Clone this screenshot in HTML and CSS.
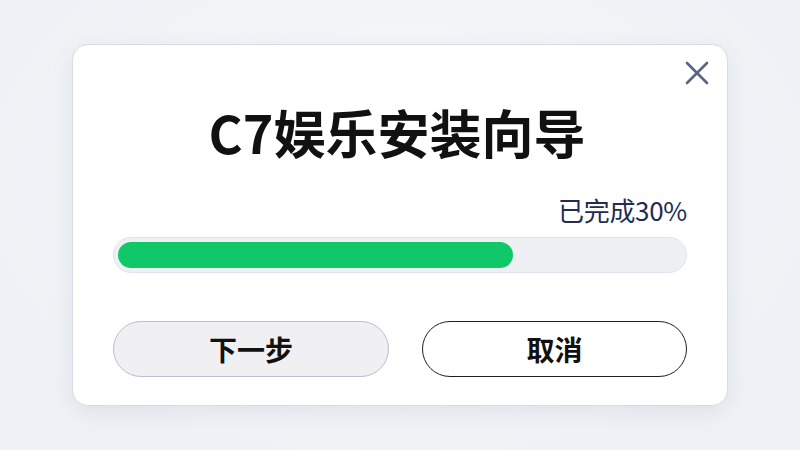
FILE: index.html
```html
<!DOCTYPE html>
<html lang="zh-CN">
<head>
    <meta charset="UTF-8">
    <meta name="viewport" content="width=device-width, initial-scale=1.0">
    <title>C7娱乐安装向导</title>
    <link rel="stylesheet" href="styles.css">
</head>
<body>
    <div class="dialog">
        <button class="close-btn" aria-label="关闭">
            <svg width="24" height="24" viewBox="0 0 24 24">
                <path d="M2 2 L22 22 M22 2 L2 22" />
            </svg>
        </button>

        <h1 class="dialog-title">C7娱乐安装向导</h1>

        <div class="progress-label">已完成30%</div>
        <div class="progress-track">
            <div class="progress-fill" style="width: 70%;"></div>
        </div>

        <div class="actions">
            <button class="btn btn-next">下一步</button>
            <button class="btn btn-cancel">取消</button>
        </div>
    </div>
</body>
</html>
```

FILE: styles.css
```css
:root {
    --bg: #eef1f5;
    --card-border: #d8dce9;
    --text-dark: #111111;
    --text-navy: #222c4f;
    --icon-gray: #5a6482;
    --track-bg: #eff0f4;
    --track-border: #dfe3ee;
    --green: #10c868;
}

* {
    margin: 0;
    padding: 0;
    box-sizing: border-box;
    font-family: "Noto Sans CJK SC", "Noto Sans", sans-serif;
}

body {
    height: 100vh;
    display: flex;
    align-items: center;
    justify-content: center;
    background: radial-gradient(ellipse at 50% 40%, #f7f8fa 0%, var(--bg) 80%);
}

.dialog {
    position: relative;
    width: 656px;
    height: 362px;
    padding: 56px 40px 0;
    background: #ffffff;
    border: 1px solid var(--card-border);
    border-radius: 16px;
    box-shadow: 0 6px 22px rgba(40, 50, 90, 0.08);
}

.close-btn {
    position: absolute;
    top: 16px;
    right: 18px;
    background: none;
    border: none;
    cursor: pointer;
    display: flex;
}

.close-btn path {
    stroke: var(--icon-gray);
    stroke-width: 2.6;
    stroke-linecap: round;
    fill: none;
}

.dialog-title {
    font-size: 52px;
    line-height: 62px;
    font-weight: 700;
    color: var(--text-dark);
    text-align: center;
    margin-right: 6px;
}

.progress-label {
    margin-top: 31px;
    font-size: 26px;
    line-height: 32px;
    font-weight: 400;
    color: var(--text-navy);
    text-align: right;
    letter-spacing: -0.3px;
}

.progress-track {
    margin-top: 11px;
    height: 36px;
    padding: 4px;
    background: var(--track-bg);
    border: 1px solid var(--track-border);
    border-radius: 9999px;
}

.progress-fill {
    height: 100%;
    background: var(--green);
    border-radius: 9999px;
}

.actions {
    margin-top: 48px;
    display: grid;
    grid-template-columns: 276px 1fr;
    gap: 33px;
}

.btn {
    height: 56px;
    border-radius: 9999px;
    font-size: 28px;
    font-weight: 700;
    color: var(--text-dark);
    cursor: pointer;
}

.btn-next {
    background: #f0f0f2;
    border: 1px solid #b9bdd6;
}

.btn-cancel {
    background: #ffffff;
    border: 1.5px solid #1e1e24;
}
```
